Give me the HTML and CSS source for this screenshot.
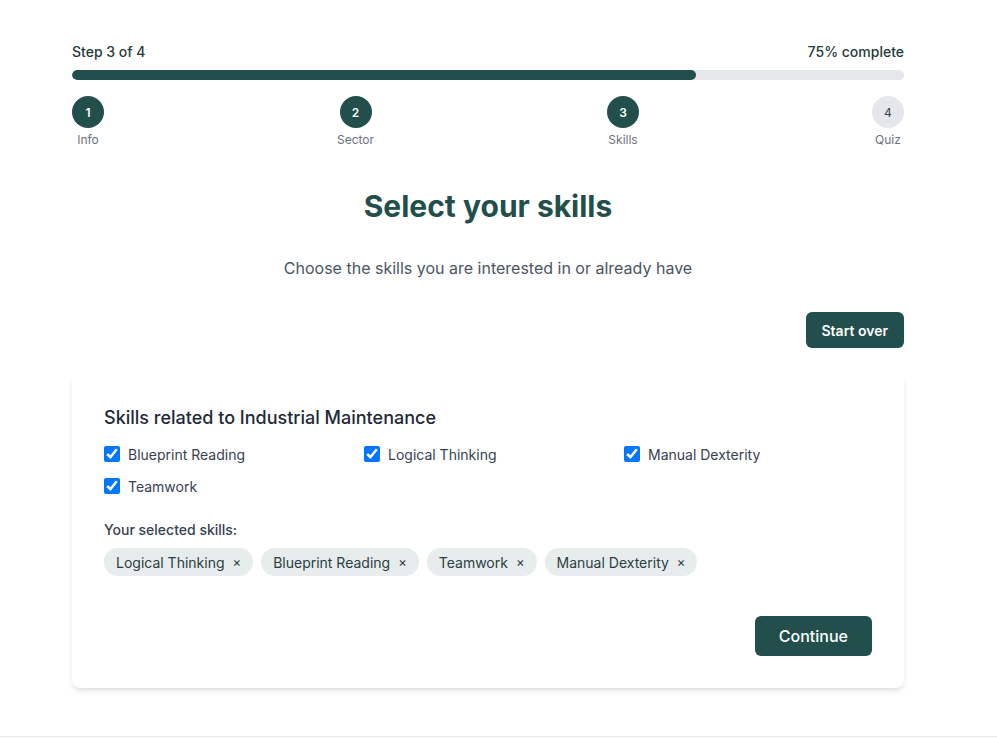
FILE: index.html
```html
<!DOCTYPE html>
<html lang="en">
<head>
<meta charset="utf-8">
<title>Select your skills</title>
<link rel="stylesheet" href="styles.css">
</head>
<body>
<main class="page">
  <div class="container">
    <div class="progress-head">
      <span>Step 3 of 4</span>
      <span>75% complete</span>
    </div>
    <div class="track"><div class="fill" style="width:75%"></div></div>
    <ol class="steps">
      <li class="step done"><span class="dot">1</span><span class="step-label">Info</span></li>
      <li class="step done"><span class="dot">2</span><span class="step-label">Sector</span></li>
      <li class="step done"><span class="dot">3</span><span class="step-label">Skills</span></li>
      <li class="step"><span class="dot">4</span><span class="step-label">Quiz</span></li>
    </ol>

    <h1 class="title">Select your skills</h1>
    <p class="subtitle">Choose the skills you are interested in or already have</p>

    <div class="actions"><button class="btn btn-sm">Start over</button></div>

    <section class="card">
      <h2 class="card-title">Skills related to Industrial Maintenance</h2>
      <div class="skill-grid">
        <label class="skill"><input type="checkbox" checked><span>Blueprint Reading</span></label>
        <label class="skill"><input type="checkbox" checked><span>Logical Thinking</span></label>
        <label class="skill"><input type="checkbox" checked><span>Manual Dexterity</span></label>
        <label class="skill"><input type="checkbox" checked><span>Teamwork</span></label>
      </div>
      <p class="selected-label">Your selected skills:</p>
      <div class="chips">
        <span class="chip">Logical Thinking <span class="x">×</span></span>
        <span class="chip">Blueprint Reading <span class="x">×</span></span>
        <span class="chip">Teamwork <span class="x">×</span></span>
        <span class="chip">Manual Dexterity <span class="x">×</span></span>
      </div>
      <div class="card-foot"><button class="btn btn-lg">Continue</button></div>
    </section>
  </div>
</main>
<footer class="footer"></footer>
</body>
</html>
```
FILE: styles.css
```css
* { box-sizing: border-box; }
html, body { margin: 0; padding: 0; }
body {
  font-family: Inter, "Noto Sans", Arial, sans-serif;
  color: #1f2937;
  background: #fff;
}
.page { padding: 42px 0 48px; }
.container { width: 832px; margin: 0 0 0 72px; }

.progress-head {
  display: flex;
  justify-content: space-between;
  font-size: 14px;
  line-height: 20px;
  font-weight: 500;
  color: #1f3a3b;
}
.track {
  margin-top: 8px;
  height: 10px;
  background: #e5e7eb;
  border-radius: 999px;
  overflow: hidden;
}
.fill { height: 100%; background: #224f4b; border-radius: 999px; }

.steps {
  list-style: none;
  margin: 16px 0 0;
  padding: 0;
  display: flex;
  justify-content: space-between;
}
.step { display: flex; flex-direction: column; align-items: center; }
.dot {
  width: 32px; height: 32px; border-radius: 50%;
  display: flex; align-items: center; justify-content: center;
  font-size: 12px; font-weight: 400;
  background: #e5e7eb; color: #374151;
}
.step.done .dot { background: #224f4b; color: #fff; font-weight: 600; }
.step-label { margin-top: 4px; font-size: 12px; line-height: 16px; color: #6b7280; }

.title {
  margin: 40px 0 0;
  text-align: center;
  font-size: 30px;
  line-height: 36px;
  font-weight: 700;
  color: #224f4b;
}
.subtitle {
  margin: 32px 0 0;
  text-align: center;
  font-size: 16px;
  line-height: 24px;
  color: #4b5563;
}
.actions { margin-top: 32px; display: flex; justify-content: flex-end; }
.btn {
  border: 0; cursor: pointer;
  background: #224f4b; color: #fff;
  font-family: inherit;
  border-radius: 6px;
}
.btn-sm { height: 36px; padding: 0 16px; font-size: 14px; font-weight: 600; }
.btn-lg { height: 40px; padding: 0 24px; font-size: 16px; font-weight: 500; }

.card {
  margin-top: 24px;
  background: #fff;
  border-radius: 8px;
  box-shadow: 0 4px 6px -1px rgba(0,0,0,0.10), 0 2px 4px -2px rgba(0,0,0,0.08);
  padding: 32px;
}
.card-title {
  margin: 0;
  font-size: 18px;
  line-height: 28px;
  font-weight: 500;
  color: #1f2937;
}
.skill-grid {
  margin-top: 12px;
  display: grid;
  grid-template-columns: repeat(3, 1fr);
  column-gap: 12px;
  row-gap: 12px;
}
.skill {
  display: flex; align-items: center; gap: 8px;
  height: 20px;
  font-size: 14px; color: #374151;
}
.skill input { width: 16px; height: 16px; margin: 0; }

.selected-label {
  margin: 24px 0 0;
  font-size: 14px; line-height: 20px; font-weight: 500;
  color: #374151;
}
.chips { margin-top: 8px; display: flex; flex-wrap: wrap; gap: 8px; }
.chip {
  display: inline-flex; align-items: center; gap: 8px;
  height: 28px;
  padding: 0 12px;
  border-radius: 999px;
  background: #e7ecec;
  font-size: 14px;
  color: #2b3f42;
}
.x { font-size: 13px; color: #2b3f42; }
.card-foot { margin-top: 40px; display: flex; justify-content: flex-end; }

.footer { border-top: 1px solid #e5e7eb; height: 10px; }
```
